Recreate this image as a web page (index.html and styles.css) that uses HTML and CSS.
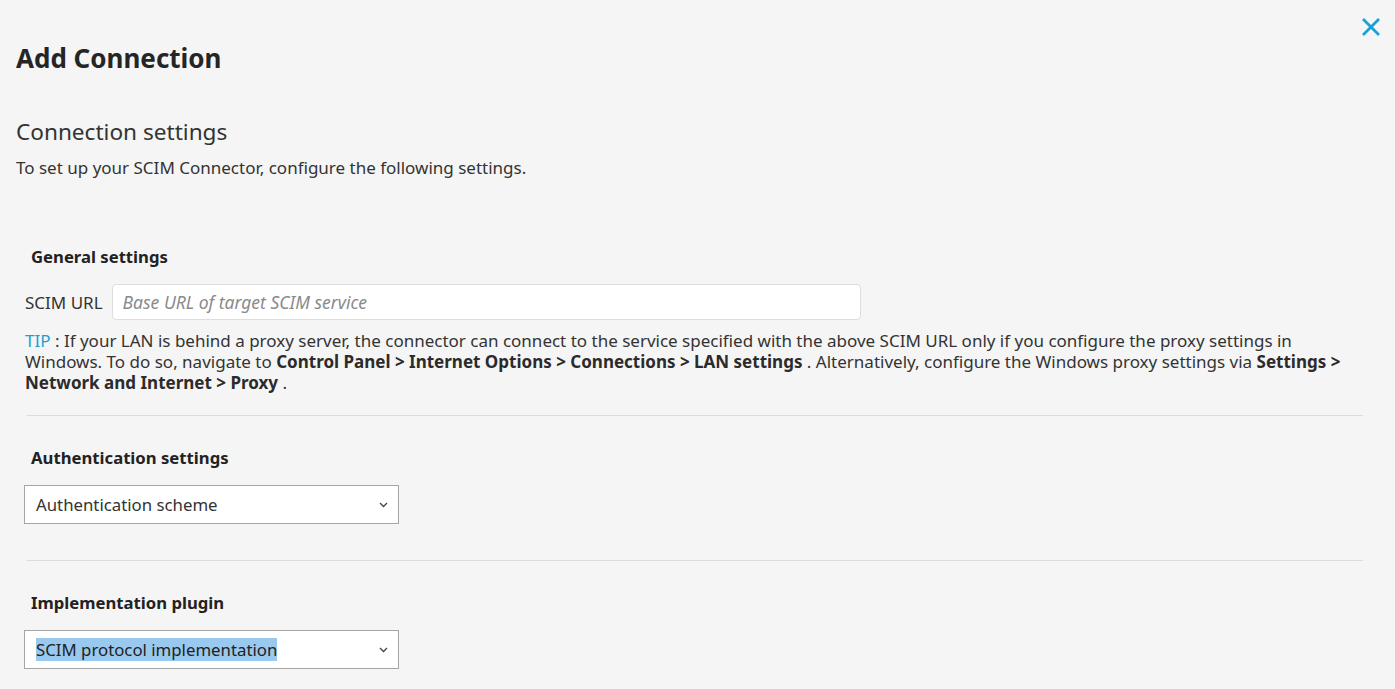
FILE: index.html
```html
<!DOCTYPE html>
<html>
<head>
<meta charset="utf-8">
<link rel="stylesheet" href="styles.css">
</head>
<body>
<div class="page">
  <button class="close" aria-label="Close">
    <svg width="18" height="18" viewBox="0 0 18 18"><path d="M2 2 L16 16 M16 2 L2 16" stroke="#1a9fd6" stroke-width="2.8" stroke-linecap="square"/></svg>
  </button>
  <h1 class="title">Add Connection</h1>
  <h2 class="subtitle">Connection settings</h2>
  <p class="desc">To set up your SCIM Connector, configure the following settings.</p>

  <section class="section first">
    <h3 class="section-title">General settings</h3>
    <div class="field-row">
      <label class="field-label">SCIM URL</label>
      <input class="text-input" type="text" placeholder="Base URL of target SCIM service">
    </div>
    <p class="tip"><span class="tip-key">TIP</span> : If your LAN is behind a proxy server, the connector can connect to the service specified with the above SCIM URL only if you configure the proxy settings in Windows. To do so, navigate to <b>Control Panel &gt; Internet Options &gt; Connections &gt; LAN settings</b> . Alternatively, configure the Windows proxy settings via <b>Settings &gt; Network and Internet &gt; Proxy</b> .</p>
  </section>

  <hr class="divider">

  <section class="section">
    <h3 class="section-title">Authentication settings</h3>
    <div class="select"><span class="select-text">Authentication scheme</span><svg class="chev" width="9" height="6" viewBox="0 0 9 6"><path d="M1 1 L4.5 4.5 L8 1" fill="none" stroke="#444" stroke-width="1.3"/></svg></div>
  </section>

  <hr class="divider">

  <section class="section">
    <h3 class="section-title">Implementation plugin</h3>
    <div class="select"><span class="select-text selected">SCIM protocol implementation</span><svg class="chev" width="9" height="6" viewBox="0 0 9 6"><path d="M1 1 L4.5 4.5 L8 1" fill="none" stroke="#444" stroke-width="1.3"/></svg></div>
  </section>
</div>
</body>
</html>
```
FILE: styles.css
```css
html, body {
  margin: 0;
  padding: 0;
  background: #f5f5f5;
}
body {
  font-family: "Noto Sans", "Open Sans", sans-serif;
  color: #333;
  font-size: 17px;
}
.page {
  position: relative;
  padding: 38px 32px 0 16px;
}
.close {
  position: absolute;
  top: 18px;
  right: 15px;
  background: none;
  border: 0;
  padding: 0;
  width: 18px;
  height: 18px;
  cursor: pointer;
}
.close svg { display: block; }
.title {
  margin: 0;
  font-size: 26px;
  font-weight: 700;
  line-height: 40px;
  color: #252525;
}
.subtitle {
  margin: 39px 0 0 0;
  font-size: 22.6px;
  font-weight: 400;
  line-height: 30px;
  color: #333;
}
.desc {
  margin: 9px 0 0 0;
  font-size: 17px;
  line-height: 23px;
}
.section {
  padding: 0 0 0 9px;
}
.section.first { margin-top: 67px; }
.section-title {
  margin: 0 0 0 6px;
  font-size: 16.7px;
  font-weight: 700;
  line-height: 22px;
  color: #222;
}
.field-row {
  display: flex;
  align-items: center;
  gap: 9px;
  margin-top: 16px;
}
.field-label {
  font-size: 17px;
}
.text-input {
  width: 749px;
  height: 36px;
  box-sizing: border-box;
  border: 1px solid #dedede;
  border-radius: 4px;
  background: #fff;
  padding: 0 10px;
  font-family: inherit;
  font-size: 17.5px;
  color: #333;
  outline: none;
}
.text-input::placeholder {
  color: #8a8a8a;
  font-style: italic;
}
.tip {
  margin: 10px 0 0 0;
  font-size: 17px;
  line-height: 21px;
  color: #333;
}
.tip b { color: #2b2b2b; }
.tip-key { color: #1a9fd6; }
.divider {
  margin: 22px 0 0 11px;
  border: 0;
  border-top: 1px solid #dcdcdc;
  height: 0;
}
.divider + .section { margin-top: 31px; }
.select {
  margin-top: 16px;
  margin-left: -1px;
  width: 375px;
  height: 39px;
  box-sizing: border-box;
  border: 1px solid #a6a6a6;
  background: #fff;
  display: flex;
  align-items: center;
  justify-content: space-between;
  padding: 0 10px 0 11px;
}
.select-text {
  font-size: 16.8px;
  color: #333;
}
.select-text.selected {
  background: #99c9ef;
  color: #222;
}
.chev { display: block; }
.divider { margin-top: 36px; }
.section.first + .divider { margin-top: 22px; }
```
